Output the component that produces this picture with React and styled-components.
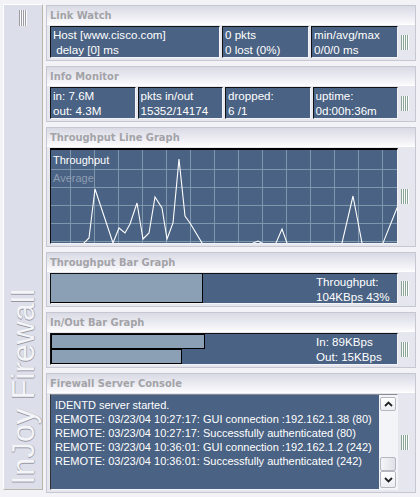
import styled, { createGlobalStyle } from 'styled-components';

const GlobalStyle = createGlobalStyle`
  html, body {
    margin: 0;
    padding: 0;
    background: #f3f3f7;
  }
  * {
    box-sizing: border-box;
  }
`;

const linkWatch = [
  ['Host [www.cisco.com]', ' delay [0] ms'],
  ['0 pkts', '0 lost (0%)'],
  ['min/avg/max', '0/0/0 ms'],
];

const infoMonitor = [
  ['in: 7.6M', 'out: 4.3M'],
  ['pkts in/out', '15352/14174'],
  ['dropped:', '6 /1'],
  ['uptime:', '0d:00h:36m'],
];

const consoleLines = [
  'IDENTD server started.',
  'REMOTE: 03/23/04 10:27:17: GUI connection :192.162.1.38 (80)',
  'REMOTE: 03/23/04 10:27:17: Successfully authenticated (80)',
  'REMOTE: 03/23/04 10:36:01: GUI connection :192.162.1.2 (242)',
  'REMOTE: 03/23/04 10:36:01: Successfully authenticated (242)',
];

const throughput = [
  [0, 97], [33, 97], [33, 93], [38, 88], [44, 39], [62, 93], [68, 78], [74, 83],
  [79, 74], [86, 53], [92, 89], [98, 83], [104, 47], [111, 58], [116, 89],
  [122, 73], [128, 9], [134, 66], [139, 73], [151, 93], [151, 97], [202, 97],
  [202, 93], [207, 91], [211, 93], [211, 97], [225, 97], [225, 93], [231, 79],
  [236, 93], [236, 97], [291, 97], [291, 93], [302, 46], [311, 93], [311, 97],
  [332, 97], [332, 93], [346, 58], [348, 55],
];

const Frame = styled.div`
  display: flex;
  width: 420px;
  height: 497px;
  padding: 4px 4px 3px 3px;
  gap: 3px;
  font-family: 'Liberation Sans', Arial, sans-serif;
`;

const Sidebar = styled.div`
  flex: 0 0 40px;
  margin-bottom: 4px;
  display: flex;
  flex-direction: column;
  align-items: center;
  justify-content: space-between;
  background: #dcdfe9;
  border-top: 1px solid #fff;
  border-left: 1px solid #fff;
  border-right: 1px solid #b9b5a9;
  border-bottom: 1px solid #b9b5a9;
`;

const SideGrip = styled.div`
  width: 8px;
  height: 16px;
  margin-top: 5px;
  background: repeating-linear-gradient(to right, #9c9ca2 0 1px, #fbfbfd 1px 2px);
`;

const Brand = styled.div`
  writing-mode: vertical-rl;
  transform: rotate(180deg);
  font-size: 32px;
  line-height: 32px;
  margin-bottom: 4px;
  color: #f4f5f9;
  text-shadow: -1px 0 0 #9798a4, 0 1px 0 #b4b5be;
  white-space: nowrap;
`;

const Main = styled.div`
  flex: 1;
  min-width: 0;
  display: flex;
  flex-direction: column;
  gap: 5px;
  padding-top: 1px;
`;

const Panel = styled.section`
  border: 1px solid #c6c7d1;
  background: #e6e7ee;
`;

const Header = styled.div`
  height: 19px;
  padding: 1px 0 0 3px;
  line-height: 17px;
  font-family: 'DejaVu Sans Condensed', 'DejaVu Sans', sans-serif;
  font-weight: bold;
  font-size: 11px;
  color: #a3a3a8;
  background: linear-gradient(to bottom, #d9dae4 0%, #ebebf2 55%, #fbfbfd 100%);
  border-bottom: 1px solid #fff;
`;

const Body = styled.div`
  display: flex;
  align-items: stretch;
  padding: 1px 0 2px 3px;
`;

const Boxes = styled.div`
  flex: 1;
  min-width: 0;
  display: flex;
  gap: 2px;
`;

const Sunken = styled.div`
  background: #4a6283;
  border-top: 1px solid #111;
  border-left: 1px solid #111;
  border-right: 1px solid #f4f4f8;
  border-bottom: 1px solid #f4f4f8;
  color: #fff;
  font-size: 11.6px;
`;

const InfoBox = styled(Sunken)`
  flex: ${(p) => p.$grow || 1} 1 0;
  min-width: 0;
  height: 32px;
  padding: 0 0 0 2px;
  line-height: 15px;
  white-space: pre;
  overflow: hidden;
`;

const GripCell = styled.div`
  flex: 0 0 17px;
  display: flex;
  align-items: center;
  padding-left: 3px;
`;

const Grip = styled.div`
  width: 8px;
  height: 15px;
  background: repeating-linear-gradient(to right, #8aa595 0 1px, #fbfbfd 1px 2px);
`;

const GraphBox = styled(Sunken)`
  flex: 1;
  min-width: 0;
  height: 96px;
  position: relative;
  overflow: hidden;
  border-top-color: #000;
  border-top-width: 2px;
`;

const Legend = styled.div`
  position: absolute;
  left: 2px;
  top: 1px;
  line-height: 18px;
  font-size: 11px;
`;

const LegendItem = styled.div`
  color: ${(p) => p.$color};
`;

const BarBox = styled(Sunken)`
  flex: 1;
  min-width: 0;
  height: ${(p) => p.$height}px;
  display: flex;
`;

const Track = styled.div`
  flex: 1;
  display: flex;
  flex-direction: column;
`;

const Bar = styled.div`
  background: #8ba0b4;
  border-right: 1px solid #000;
  border-bottom: 1px solid #000;
  ${(p) => (p.$framed ? 'border-top: 1px solid #000; border-left: 1px solid #000;' : '')}
  flex: 1;
`;

const BarLabel = styled.div`
  flex: 0 0 81px;
  line-height: 15px;
  white-space: nowrap;
`;

const ConsoleBox = styled(Sunken)`
  flex: 1;
  min-width: 0;
  height: 96px;
  display: flex;
  border-top-color: #8a8a92;
  border-left-color: #333;
`;

const ConsoleText = styled.div`
  flex: 1;
  min-width: 0;
  padding: 3px 0 0 4px;
  font-size: 11px;
  line-height: 14px;
  white-space: nowrap;
  overflow: hidden;
`;

const Scrollbar = styled.div`
  flex: 0 0 18px;
  display: flex;
  flex-direction: column;
  background: #f3f4f8;
  padding: 2px 1px 1px 1px;
`;

const ScrollButton = styled.div`
  height: ${(p) => p.$h}px;
  display: flex;
  align-items: center;
  justify-content: center;
  background: linear-gradient(to bottom, #ffffff, #eceef3);
  border: 1px solid #b4b6c0;
  border-radius: 2px;
`;

const ScrollTrack = styled.div`
  flex: 1;
  display: flex;
  flex-direction: column;
  justify-content: flex-end;
`;

const Thumb = styled.div`
  height: 14px;
  background: linear-gradient(to right, #f4f5f8, #dfe1e8);
  border: 1px solid #b4b6c0;
  border-radius: 2px;
`;

const Chevron = ({ up }) => (
  <svg width="9" height="6" viewBox="0 0 9 6">
    <polyline
      points={up ? '1,5 4.5,1.5 8,5' : '1,1 4.5,4.5 8,1'}
      fill="none"
      stroke="#222"
      strokeWidth="1.8"
    />
  </svg>
);

const LineGraph = () => {
  const vLines = Array.from({ length: 14 }, (_, i) => 19 + i * 24);
  const hLines = [19, 37, 55, 73, 91];
  return (
    <svg width="348" height="94" style={{ display: 'block' }}>
      {vLines.map((x) => (
        <line key={'v' + x} x1={x + 0.5} x2={x + 0.5} y1="0" y2="94" stroke="#7f97ad" />
      ))}
      {hLines.map((y) => (
        <line key={'h' + y} y1={y + 0.5} y2={y + 0.5} x1="0" x2="348" stroke="#7f97ad" />
      ))}
      <polyline
        points={throughput.map(([x, y]) => `${x},${y}`).join(' ')}
        fill="none"
        stroke="#fff"
        strokeWidth="1.1"
      />
    </svg>
  );
};

const Section = ({ title, children }) => (
  <Panel>
    <Header>{title}</Header>
    <Body>
      <Boxes>{children}</Boxes>
      <GripCell>
        <Grip />
      </GripCell>
    </Body>
  </Panel>
);

export default function App() {
  return (
    <>
      <GlobalStyle />
      <Frame>
        <Sidebar>
          <SideGrip />
          <Brand>InJoy Firewall</Brand>
        </Sidebar>
        <Main>
          <Section title="Link Watch">
            {linkWatch.map((lines, i) => (
              <InfoBox key={i} $grow={i === 0 ? 2 : 1}>
                {lines.join('\n')}
              </InfoBox>
            ))}
          </Section>
          <Section title="Info Monitor">
            {infoMonitor.map((lines, i) => (
              <InfoBox key={i}>{lines.join('\n')}</InfoBox>
            ))}
          </Section>
          <Section title="Throughput Line Graph">
            <GraphBox>
              <LineGraph />
              <Legend>
                <LegendItem $color="#fff">Throughput</LegendItem>
                <LegendItem $color="#8d9db2">Average</LegendItem>
              </Legend>
            </GraphBox>
          </Section>
          <Section title="Throughput Bar Graph">
            <BarBox $height={31}>
              <Track>
                <Bar style={{ width: '57.5%' }} />
              </Track>
              <BarLabel>
                Throughput:
                <br />
                104KBps 43%
              </BarLabel>
            </BarBox>
          </Section>
          <Section title="In/Out Bar Graph">
            <BarBox $height={32}>
              <Track>
                <Bar $framed style={{ width: '58%' }} />
                <Bar $framed style={{ width: '49.5%' }} />
              </Track>
              <BarLabel>
                In: 89KBps
                <br />
                Out: 15KBps
              </BarLabel>
            </BarBox>
          </Section>
          <Section title="Firewall Server Console">
            <ConsoleBox>
              <ConsoleText>
                {consoleLines.map((l) => (
                  <div key={l}>{l}</div>
                ))}
              </ConsoleText>
              <Scrollbar>
                <ScrollButton $h={14}>
                  <Chevron up />
                </ScrollButton>
                <ScrollTrack>
                  <Thumb />
                </ScrollTrack>
                <ScrollButton $h={17}>
                  <Chevron />
                </ScrollButton>
              </Scrollbar>
            </ConsoleBox>
          </Section>
        </Main>
      </Frame>
    </>
  );
}
